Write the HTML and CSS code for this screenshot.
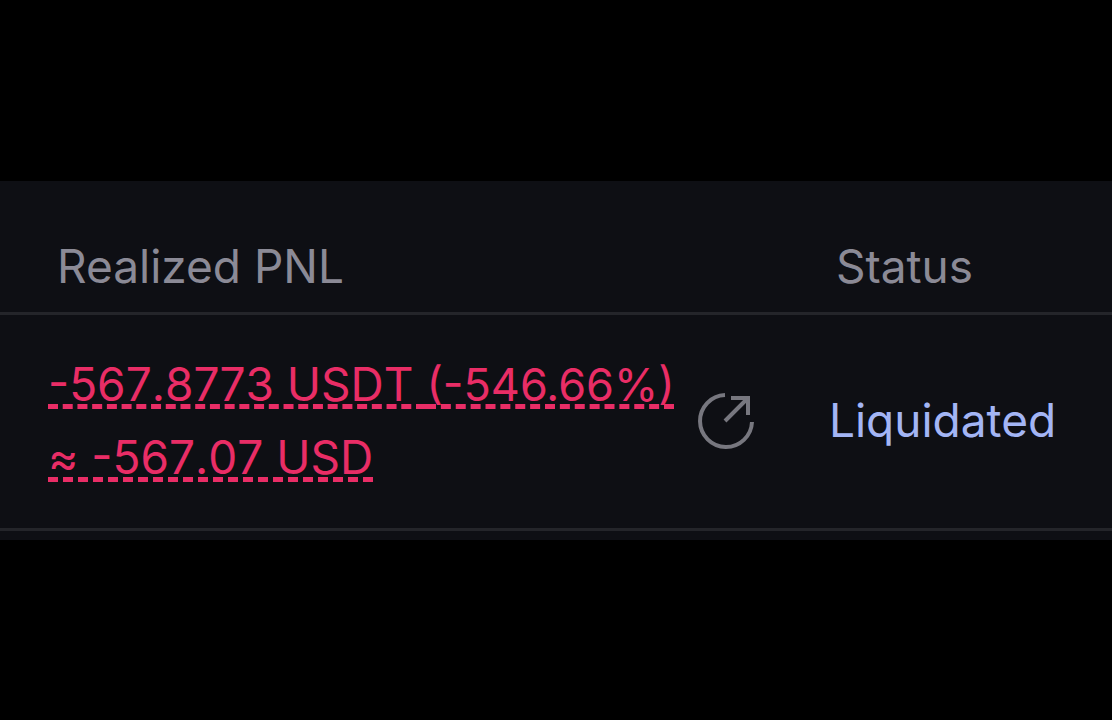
FILE: index.html
```html
<!DOCTYPE html>
<html lang="en">
  <head>
    <meta charset="UTF-8" />
    <meta name="viewport" content="width=device-width, initial-scale=1.0" />
    <title>Realized PNL</title>
    <link rel="stylesheet" href="styles.css">
  </head>
  <body>
    <main class="panel">
      <table class="positions">
        <thead>
          <tr>
            <th class="pnl-col" scope="col">Realized PNL</th>
            <th class="status-col" scope="col">Status</th>
          </tr>
        </thead>
        <tbody>
          <tr>
            <td class="pnl-col">
              <div class="pnl">
                <div class="amounts">
                  <div><span class="dashed">-567.8773 USDT </span><span class="dashed percent">(-546.66%)</span></div>
                  <div><span class="dashed">≈ -567.07 USD</span></div>
                </div>
                <button class="share" type="button" aria-label="Share">
                  <svg viewBox="0 0 60 60" fill="none" stroke="currentColor" stroke-width="4">
                    <path d="M28 5 A26 26 0 1 0 55 32" />
                    <path d="M28 31 L51 8 M34 8 H51 V25" />
                  </svg>
                </button>
              </div>
            </td>
            <td class="status-col">Liquidated</td>
          </tr>
        </tbody>
      </table>
    </main>
  </body>
</html>
```
FILE: styles.css
```css
* {
  margin: 0;
  padding: 0;
  box-sizing: border-box;
}

body {
  display: flex;
  align-items: center;
  min-height: 100vh;
  background-color: #000;
  color: #8b8a96;
  font-family: Inter, sans-serif;
  font-size: 46px;
}

.panel {
  width: 100%;
  padding-bottom: 9px;
  background-color: #0e0f14;
}

/* Positions table */
.positions {
  width: 100%;
  border-collapse: collapse;
}

.positions th {
  padding: 56px 0 17px;
  border-bottom: 3px solid #24252a;
  font-weight: 400;
  line-height: 58px;
  text-align: left;
}

.positions td {
  padding: 33px 0 35px;
  border-bottom: 3px solid #24252a;
  line-height: 72px;
}

.positions th.pnl-col {
  padding-left: 57px;
}

.positions td.pnl-col {
  width: 74%;
  padding-left: 48px;
}

.positions th.status-col {
  padding-left: 13px;
}

.positions td.status-col {
  padding-left: 6px;
  color: #a3b5f5;
}

/* Amounts and share button */
.pnl {
  display: flex;
  align-items: center;
  gap: 22px;
}

.amounts {
  color: #e92d66;
  font-kerning: none;
  white-space: nowrap;
}

.dashed {
  text-decoration: underline dashed 5px;
  text-decoration-skip-ink: none;
  text-underline-offset: 3px;
}

.percent {
  font-size: 45px;
  font-kerning: normal;
}

.share {
  width: 60px;
  height: 60px;
  border: none;
  background: none;
  color: #77777f;
  cursor: pointer;
}

.share svg {
  display: block;
}
```
